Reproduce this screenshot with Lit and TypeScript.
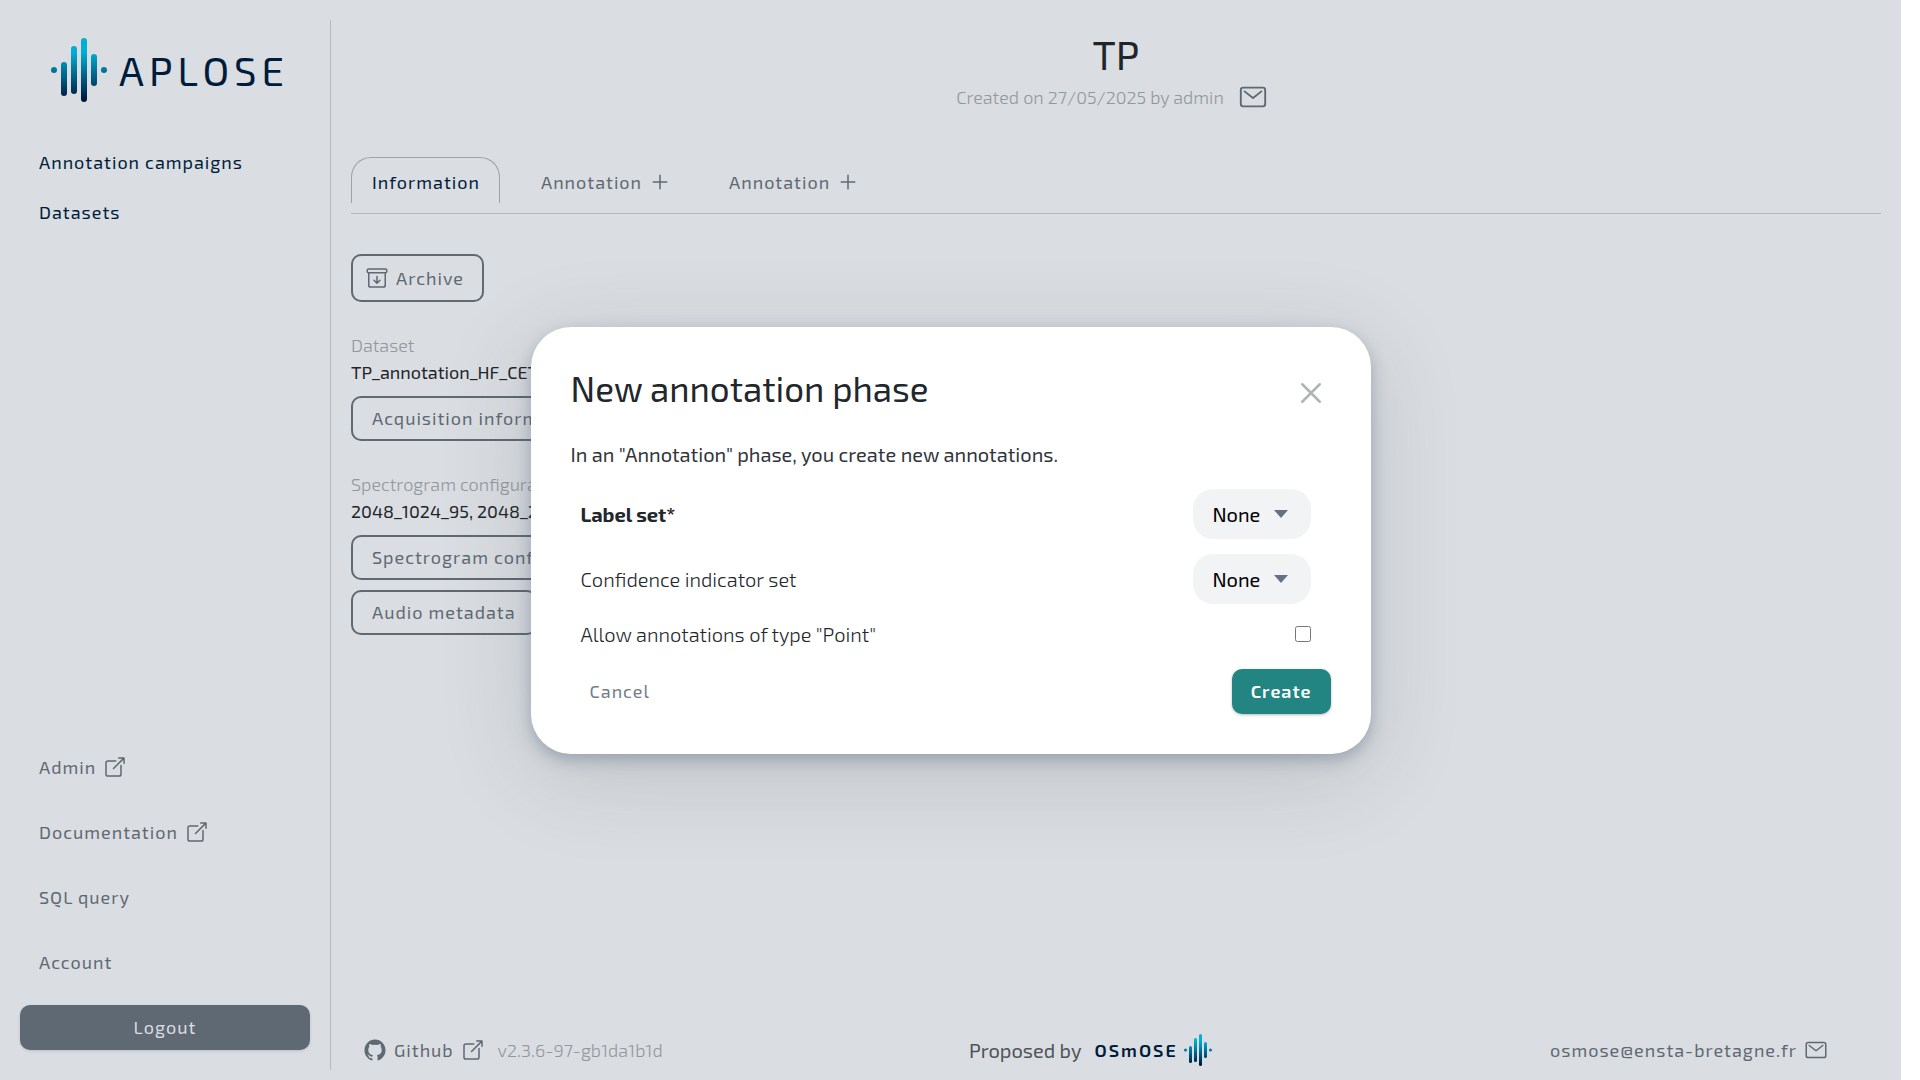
import { LitElement, html, css, svg, nothing } from "lit";
import { customElement, property } from "lit/decorators.js";

const ICONS = {
  open: svg`<path d="M384 224v184a40 40 0 01-40 40H104a40 40 0 01-40-40V168a40 40 0 0140-40h167.48M336 64h112v112M224 288L440 72"/>`,
  mail: svg`<rect x="48" y="96" width="416" height="320" rx="40"/><path d="M112 160l144 112 144-112"/>`,
  archive: svg`<path d="M80 152v256a40.12 40.12 0 0040 40h272a40.12 40.12 0 0040-40V152"/><rect x="48" y="64" width="416" height="80" rx="28"/><path d="M320 304l-64 64-64-64M256 345.89V224"/>`,
  add: svg`<path d="M256 112v288M400 256H112"/>`,
  close: svg`<path d="M368 368L144 144M368 144L144 368"/>`,
  github: svg`<path fill="currentColor" stroke="none" d="M256 32C132.3 32 32 134.9 32 261.7c0 101.5 64.2 187.5 153.2 217.9a17.56 17.56 0 003.8.4c8.3 0 11.5-6.1 11.5-11.4 0-5.5-.2-19.9-.3-39.1a102.4 102.4 0 01-22.6 2.7c-43.1 0-52.9-33.5-52.9-33.5-10.2-26.5-24.9-33.6-24.9-33.6-19.5-13.7-.1-14.1 1.4-14.1h.1c22.5 2 34.3 23.8 34.3 23.8 11.2 19.6 26.2 25.1 39.6 25.1a63 63 0 0025.6-6c2-14.8 7.8-24.9 14.2-30.7-49.7-5.8-102-25.5-102-113.5 0-25.1 8.7-45.6 23-61.6-2.3-5.8-10-29.2 2.2-60.8a18.64 18.64 0 015-.5c8.1 0 26.4 3.1 56.6 24.1a208.21 208.21 0 01112.2 0c30.2-21 48.5-24.1 56.6-24.1a18.64 18.64 0 015 .5c12.2 31.6 4.5 55 2.2 60.8 14.3 16.1 23 36.6 23 61.6 0 88.2-52.4 107.6-102.3 113.3 8 7.1 15.2 21.1 15.2 42.5 0 30.7-.3 55.5-.3 63 0 5.4 3.1 11.5 11.4 11.5a19.35 19.35 0 004-.4C415.9 449.2 480 363.1 480 261.7 480 134.9 379.7 32 256 32z"/>`,
};

@customElement("ui-icon")
export class UiIcon extends LitElement {
  static styles = css`
    :host { display: inline-block; width: 24px; height: 24px; flex: none; }
    .glyph {
      display: block; width: 100%; height: 100%; fill: none; stroke: currentColor;
      stroke-width: 32; stroke-linecap: round; stroke-linejoin: round;
    }
  `;
  @property() name: keyof typeof ICONS = "open";
  render() {
    return html`<svg class="glyph" viewBox="0 0 512 512" aria-hidden="true">${ICONS[this.name]}</svg>`;
  }
}

@customElement("wave-mark")
export class WaveMark extends LitElement {
  static styles = css`
    :host { display: block; flex: none; }
    .mark { display: block; width: 100%; height: 100%; }
  `;
  render() {
    return html`<svg class="mark" viewBox="0 0 56 64" aria-hidden="true">
      <defs>
        <linearGradient id="wave" gradientUnits="userSpaceOnUse" x1="0" y1="14" x2="0" y2="62">
          <stop offset="0" stop-color="#00b0d4" />
          <stop offset="1" stop-color="#00153a" />
        </linearGradient>
      </defs>
      <g fill="url(#wave)">
        <circle cx="3" cy="32" r="3" />
        <rect x="10" y="24" width="6" height="34" rx="3" />
        <rect x="20" y="8" width="6" height="48" rx="3" />
        <rect x="30" y="0" width="6" height="64" rx="3" />
        <rect x="40" y="16" width="6" height="32" rx="3" />
        <circle cx="53" cy="32" r="3" />
      </g>
    </svg>`;
  }
}

@customElement("app-root")
export class AppRoot extends LitElement {
  static styles = css`
    :host {
      display: block;
      background: #fff;
      font-family: "Exo 2", Roboto, "Liberation Sans", sans-serif;
      font-size: 18px;
      color: #1f252b;
      --bg: #dadde1;
      --navy: #001c3b;
      --slate: #5f6973;
      --muted: #92989f;
      --line: #b6babf;
    }
    * { box-sizing: border-box; }
    h1, h2, p { margin: 0; font-weight: 400; }
    a { text-decoration: none; }
    button, select, input { margin: 0; font: inherit; }

    .page {
      position: relative;
      display: grid;
      grid-template-columns: 331px minmax(0, 1fr);
      min-height: 100vh;
      margin-right: 19px;
      background: var(--bg);
    }

    .action {
      display: inline-flex;
      align-items: center;
      gap: 7px;
      height: 45px;
      padding: 0 19px 1px;
      border: 0;
      border-radius: 10px;
      background: none;
      color: var(--slate);
      font-size: 18px;
      font-weight: 400;
      letter-spacing: 1px;
      white-space: nowrap;
    }
    .strong { color: var(--navy); }
    .outlined { border: 2px solid var(--slate); }
    .filled { justify-content: center; background: var(--slate); color: var(--bg); box-shadow: 0 1px 3px #0002; }

    .sidebar {
      display: flex;
      flex-direction: column;
      margin: 20px 0 10px;
      padding: 18px 20px 20px;
      border-right: 1px solid var(--line);
    }
    .brand {
      display: flex;
      align-items: center;
      gap: 12px;
      height: 64px;
      margin: 0 0 38px 31px;
      color: var(--navy);
      font-size: 40px;
      letter-spacing: 5px;
    }
    .brand-mark { width: 56px; height: 64px; }
    .nav { display: flex; flex-direction: column; gap: 5px; }
    .nav-bottom { margin-top: auto; gap: 20px; }

    .main { display: flex; flex-direction: column; padding: 0 20px; }
    .heading { display: flex; flex-direction: column; align-items: center; padding-top: 29px; }
    .title { font-size: 40px; line-height: 50px; }
    .created { display: flex; align-items: center; gap: 14px; height: 35px; padding-right: 8px; color: var(--muted); font-weight: 300; }
    .mail-link { display: flex; color: var(--slate); }
    .mail-icon { width: 30px; height: 30px; }

    .tabs { display: flex; gap: 20px; margin-top: 43px; padding-bottom: 10px; border-bottom: 1px solid var(--line); }
    .tab { height: 46px; padding: 2px 19px 0 20px; border: 1px solid transparent; border-bottom: 0; border-radius: 20px 20px 0 0; }
    .tab-active { border-color: #9da3aa; color: var(--navy); }
    .tab-icon { margin: 0 -4px 0 -1px; }

    .content { display: flex; flex-direction: column; align-items: flex-start; gap: 30px; padding-top: 40px; }
    .archive { height: 48px; padding: 0 18px 1px 12px; }
    .info { display: flex; flex-direction: column; align-items: flex-start; gap: 10px; }
    .info-text { line-height: 27px; white-space: nowrap; }
    .info-label { color: var(--muted); font-weight: 300; }

    .footer { display: flex; align-items: center; justify-content: space-between; height: 60px; margin-top: auto; padding: 0 53px 0 12px; }
    .group { display: flex; align-items: center; gap: 13px; }
    .link { padding: 0; }
    .version { color: var(--muted); font-weight: 300; }
    .proposed { color: #4f545a; font-size: 20px; }
    .partner { display: flex; align-items: center; gap: 6px; color: var(--navy); font-weight: 600; letter-spacing: 2px; }
    .partner-mark { width: 28px; height: 32px; }
    .contact { padding-left: 32px; }

    .overlay { position: absolute; inset: 0; display: grid; place-items: center; }
    .modal {
      width: 840px;
      max-width: 100%;
      padding: 40px;
      border-radius: 40px;
      background: #fff;
      color: #22272b;
      font-size: 20px;
      box-shadow: 0 6px 16px rgba(75, 90, 115, 0.36), 0 20px 90px rgba(60, 75, 90, 0.18);
    }
    .modal-head { display: flex; justify-content: space-between; height: 52px; margin-bottom: 22px; }
    .modal-title { font-size: 35px; line-height: 42px; }
    .close { display: flex; align-items: center; padding: 0; border: 0; background: none; color: #b0b4b8; }
    .close-icon { width: 40px; height: 40px; }
    .modal-text { line-height: 27px; margin-bottom: 21px; color: #30353a; }
    .form { display: flex; flex-direction: column; gap: 15px; padding: 0 20px 0 10px; }
    .row { display: flex; align-items: center; justify-content: space-between; min-height: 30px; }
    .row-label { font-weight: 300; }
    .required { font-weight: 700; }
    .picker { display: grid; align-items: center; }
    .select {
      grid-area: 1 / 1;
      width: 118px;
      height: 50px;
      padding: 0 44px 0 20px;
      border: 0;
      border-radius: 20px;
      appearance: none;
      background: #f1f3f5;
      color: #000;
    }
    .caret { grid-area: 1 / 1; justify-self: end; width: 14px; height: 8px; margin-right: 23px; fill: #647287; pointer-events: none; }
    .check { width: 16px; height: 16px; }
    .modal-actions { display: flex; justify-content: space-between; margin-top: 20px; }
    .cancel { color: #727d87; }
    .create { background: #238582; color: #fff; font-weight: 600; box-shadow: 0 1px 3px #0004; }
  `;

  private external(label: string) {
    return html`<a class="action" href="#">${label}<ui-icon name="open"></ui-icon></a>`;
  }

  private tab(label: string, active = false) {
    return html`<button class="action tab ${active ? "tab-active" : ""}" role="tab" aria-selected=${active}>
      ${label}${active ? nothing : html`<ui-icon class="tab-icon" name="add"></ui-icon>`}
    </button>`;
  }

  private picker(id: string, label: string, required = false) {
    return html`<div class="row">
      <label class="row-label ${required ? "required" : ""}" for=${id}>${label}</label>
      <div class="picker">
        <select class="select" id=${id}><option>None</option></select>
        <svg class="caret" viewBox="0 0 14 8" aria-hidden="true"><path d="M0 0h14L7 8z" /></svg>
      </div>
    </div>`;
  }

  render() {
    return html`<div class="page">
      <aside class="sidebar">
        <div class="brand"><wave-mark class="brand-mark"></wave-mark><span>APLOSE</span></div>
        <nav class="nav">
          <a class="action strong" href="#">Annotation campaigns</a>
          <a class="action strong" href="#">Datasets</a>
        </nav>
        <nav class="nav nav-bottom">
          ${this.external("Admin")} ${this.external("Documentation")}
          <a class="action" href="#">SQL query</a>
          <a class="action" href="#">Account</a>
          <button class="action filled">Logout</button>
        </nav>
      </aside>

      <main class="main">
        <header class="heading">
          <h1 class="title">TP</h1>
          <div class="created">
            <span>Created on 27/05/2025 by admin</span>
            <a class="mail-link" href="#" aria-label="mail"><ui-icon class="mail-icon" name="mail"></ui-icon></a>
          </div>
        </header>
        <div class="tabs" role="tablist">
          ${this.tab("Information", true)} ${this.tab("Annotation")} ${this.tab("Annotation")}
        </div>
        <div class="content">
          <button class="action outlined archive"><ui-icon name="archive"></ui-icon>Archive</button>
          <section class="info">
            <div class="info-text"><div class="info-label">Dataset</div><div>TP_annotation_HF_CET</div></div>
            <button class="action outlined">Acquisition information</button>
          </section>
          <section class="info">
            <div class="info-text"><div class="info-label">Spectrogram configuration</div><div>2048_1024_95, 2048_2</div></div>
            <button class="action outlined">Spectrogram configuration</button>
            <button class="action outlined">Audio metadata</button>
          </section>
        </div>
        <footer class="footer">
          <div class="group">
            <a class="action link" href="#"><ui-icon name="github"></ui-icon>Github<ui-icon name="open"></ui-icon></a>
            <span class="version">v2.3.6-97-gb1da1b1d</span>
          </div>
          <div class="group">
            <span class="proposed">Proposed by</span>
            <a class="partner" href="#">OSmOSE<wave-mark class="partner-mark"></wave-mark></a>
          </div>
          <a class="action link contact" href="#">osmose@ensta-bretagne.fr<ui-icon name="mail"></ui-icon></a>
        </footer>
      </main>

      <div class="overlay">
        <div class="modal" role="dialog" aria-labelledby="modal-title">
          <div class="modal-head">
            <h2 class="modal-title" id="modal-title">New annotation phase</h2>
            <button class="close" aria-label="close"><ui-icon class="close-icon" name="close"></ui-icon></button>
          </div>
          <p class="modal-text">In an "Annotation" phase, you create new annotations.</p>
          <div class="form">
            ${this.picker("label-set", "Label set*", true)}
            ${this.picker("confidence-set", "Confidence indicator set")}
            <div class="row">
              <label class="row-label" for="allow-point">Allow annotations of type "Point"</label>
              <input class="check" id="allow-point" type="checkbox" />
            </div>
          </div>
          <div class="modal-actions">
            <button class="action cancel">Cancel</button>
            <button class="action create">Create</button>
          </div>
        </div>
      </div>
    </div>`;
  }
}
